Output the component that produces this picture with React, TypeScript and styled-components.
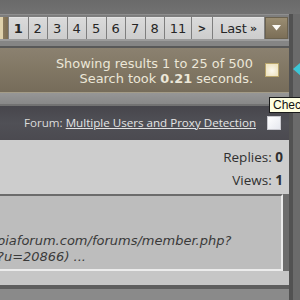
import React from 'react';
import styled, { createGlobalStyle } from 'styled-components';

const GlobalStyle = createGlobalStyle`
  html, body {
    margin: 0;
    padding: 0;
    background: #6d6d6d;
    overflow: hidden;
  }
`;

const pages = ['1', '2', '3', '4', '5', '6', '7', '8'];

export default function App() {
  return (
    <>
      <GlobalStyle />
      <Frame>
        <TopStrip />
        <Columns>
          <Main>
            <PagerRow>
              <PageEdge />
              {pages.map((p) => (
                <PageButton key={p} current={p === '1'}>
                  {p}
                </PageButton>
              ))}
              <PageButton wide={26}>11</PageButton>
              <PageButton wide={20} small>&gt;</PageButton>
              <PageButton wide={51}>
                Last <b>»</b>
              </PageButton>
              <MenuButton>
                <svg width="9" height="6" viewBox="0 0 9 6">
                  <path d="M0 0 H9 L4.5 5.5 Z" fill="#fbfaf6" />
                </svg>
              </MenuButton>
            </PagerRow>
            <Shelf />
            <ResultsPanel>
              <ResultsText>
                <div>Showing results 1 to 25 of 500</div>
                <div>
                  Search took <b>0.21</b> seconds.
                </div>
              </ResultsText>
              <CheckBox tone="cream" />
            </ResultsPanel>
            <Lip />
            <ForumHeader>
              <ForumTitle>
                Forum: <a href="#">Multiple Users and Proxy Detection</a>
              </ForumTitle>
              <CheckBox tone="white" />
            </ForumHeader>
            <PostBody>
              <Stat>
                Replies: <b>0</b>
              </Stat>
              <Stat>
                Views: <b>1</b>
              </Stat>
            </PostBody>
            <Snippet>
              <SnippetLine>piaforum.com/forums/member.php?</SnippetLine>
              <SnippetLine>?u=20866) ...</SnippetLine>
            </Snippet>
            <Footer />
          </Main>
          <Gutter>
            <svg width="8" height="14" viewBox="0 0 8 14">
              <path d="M8 0 V14 L0 7 Z" fill="#3cc6d6" />
            </svg>
          </Gutter>
        </Columns>
        <Tooltip>Check all posts</Tooltip>
      </Frame>
    </>
  );
}

const Frame = styled.div`
  position: relative;
  width: 300px;
  height: 300px;
  overflow: hidden;
  display: flex;
  flex-direction: column;
  background: #6d6d6d;
`;

const TopStrip = styled.div`
  height: 14px;
  flex: none;
  background: linear-gradient(180deg, #6a6a6a, #727272);
`;

const Columns = styled.div`
  flex: 1;
  display: flex;
  min-height: 0;
`;

const Main = styled.div`
  width: 289px;
  flex: none;
  display: flex;
  flex-direction: column;
`;

const PagerRow = styled.div`
  height: 25px;
  box-sizing: border-box;
  border-top: 1px solid #8f8f8f;
  padding-top: 2px;
  display: flex;
  gap: 1px;
  background: #7e7e7e;
`;

const PageEdge = styled.div`
  width: 8px;
  height: 22px;
  background: linear-gradient(90deg, #e0d2ac 0 3px, #8b7b5d 3px, #7c6d52);
`;

const PageButton = styled.div<{ current?: boolean; wide?: number; small?: boolean }>`
  width: ${({ wide }) => (wide ? `${wide}px` : '18.5px')};
  height: 22px;
  box-sizing: border-box;
  border-top: 1px solid #e4e4e4;
  background: linear-gradient(180deg, #dadada, #cdcdcd);
  display: flex;
  align-items: center;
  justify-content: center;
  font-family: 'DejaVu Sans', Verdana, sans-serif;
  font-size: ${({ small }) => (small ? '10px' : '13px')};
  font-weight: ${({ current, small }) => (current || small ? 'bold' : 'normal')};
  color: #262626;

  b {
    font-size: 11px;
    margin-left: 3px;
  }
`;

const MenuButton = styled.div`
  width: 23px;
  height: 22px;
  box-sizing: border-box;
  border: 1px solid #6b624f;
  background: linear-gradient(180deg, #9a8d72, #7b6e57);
  display: flex;
  align-items: center;
  justify-content: center;
`;

const Shelf = styled.div`
  height: 9px;
  box-sizing: border-box;
  border-top: 2px solid #9c9c9c;
  border-bottom: 2px solid #595959;
  background: #858585;
`;

const ResultsPanel = styled.div`
  height: 45px;
  box-sizing: border-box;
  border-bottom: 1px solid #a49c88;
  background: linear-gradient(180deg, #8b8170 0%, #827865 45%, #766c5a 100%);
  display: flex;
  align-items: center;
  justify-content: flex-end;
  padding-right: 10px;
  gap: 12px;
`;

const ResultsText = styled.div`
  text-align: right;
  font-family: 'DejaVu Sans', Verdana, sans-serif;
  font-size: 12.9px;
  line-height: 15px;
  color: #ece7d8;
  margin-top: 2px;
`;

const CheckBox = styled.div<{ tone: 'cream' | 'white' }>`
  width: 14px;
  height: 14px;
  box-sizing: border-box;
  border: 1px solid ${({ tone }) => (tone === 'cream' ? '#b8a56c' : '#c9c9cf')};
  background: ${({ tone }) =>
    tone === 'cream'
      ? 'radial-gradient(circle at 50% 55%, #fbf8ef 0, #efe5c6 70%)'
      : 'linear-gradient(135deg, #ffffff, #e6e8ef)'};
`;

const Lip = styled.div`
  height: 13px;
  box-sizing: border-box;
  border-bottom: 2px solid #727272;
  background: linear-gradient(180deg, #969696, #888888);
`;

const ForumHeader = styled.div`
  height: 34px;
  background: linear-gradient(180deg, #47464c, #505056 50%, #4b4a50);
  display: flex;
  align-items: center;
  justify-content: flex-end;
  padding-right: 8px;
  gap: 11px;
`;

const ForumTitle = styled.div`
  font-family: 'Open Sans', 'Liberation Sans', sans-serif;
  font-size: 11.6px;
  color: #dcdcdc;
  margin-top: -2px;

  a {
    color: #e4e4e4;
    text-decoration: underline;
  }
`;

const PostBody = styled.div`
  height: 54px;
  box-sizing: border-box;
  padding: 6px 6px 0 0;
  background: #cdcdcd;
`;

const Stat = styled.div`
  text-align: right;
  font-family: 'Open Sans', 'Liberation Sans', sans-serif;
  font-size: 13.5px;
  line-height: 23px;
  color: #303030;
`;

const Snippet = styled.div`
  height: 77px;
  box-sizing: border-box;
  margin-right: 6px;
  border-top: 2px solid #6c6c6c;
  border-right: 2px solid #ececec;
  border-bottom: 2px solid #ececec;
  background: #bdbdbd;
  display: flex;
  flex-direction: column;
  justify-content: flex-end;
  padding-bottom: 4px;
  overflow: hidden;
`;

const SnippetLine = styled.div`
  margin-left: -3px;
  white-space: nowrap;
  font-family: 'DejaVu Sans', Verdana, sans-serif;
  font-style: italic;
  font-size: 13px;
  line-height: 16px;
  color: #3a3a3a;
`;

const Footer = styled.div`
  flex: 1;
  background: linear-gradient(180deg, #c6c6c6 0 14px, #5e5e5e 14px 18px, #8a8a8a 18px);
`;

const Gutter = styled.div`
  flex: 1;
  box-sizing: border-box;
  border-left: 4px solid #525252;
  background: #6b6b6b;
  display: flex;
  flex-direction: column;
  align-items: flex-end;
  padding-top: 48px;
`;

const Tooltip = styled.div`
  position: absolute;
  left: 269px;
  top: 97px;
  height: 16px;
  box-sizing: border-box;
  padding: 0 3px;
  border: 1px solid #1a1a1a;
  background: #ffffe1;
  white-space: nowrap;
  font-family: 'Liberation Sans', Arial, sans-serif;
  font-size: 12px;
  line-height: 14px;
  color: #111;
`;
